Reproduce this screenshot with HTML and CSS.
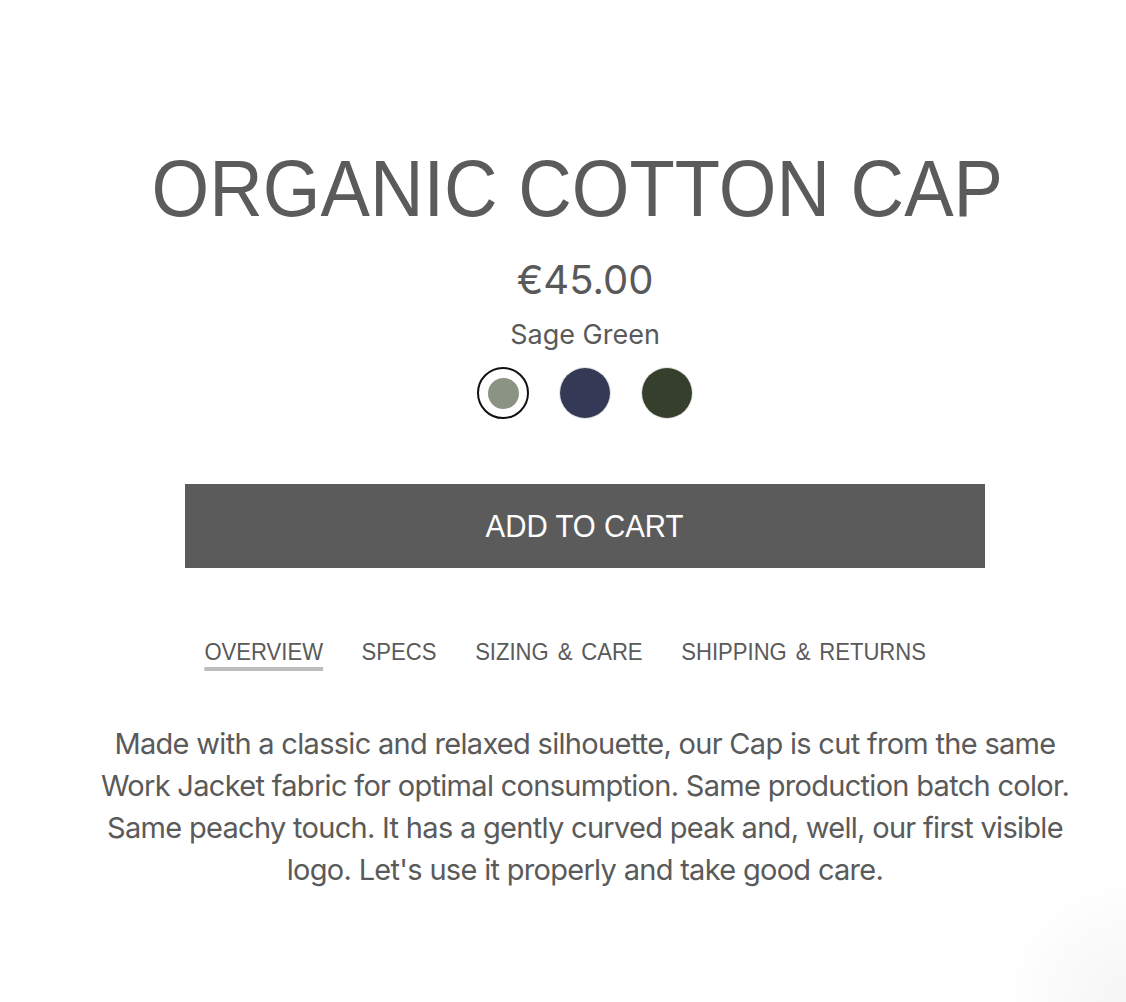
FILE: index.html
```html
<!DOCTYPE html>
<html lang="en">
<head>
<meta charset="utf-8">
<title>Organic Cotton Cap</title>
<link rel="stylesheet" href="styles.css">
</head>
<body>
<main class="product">
  <h1 class="title">ORGANIC COTTON CAP</h1>
  <div class="price">€45.00</div>
  <div class="color-name">Sage Green</div>
  <div class="swatches">
    <button class="swatch selected" aria-label="Sage Green"><span class="dot sage"></span></button>
    <button class="swatch" aria-label="Navy"><span class="dot navy"></span></button>
    <button class="swatch" aria-label="Forest Green"><span class="dot forest"></span></button>
  </div>
  <button class="cart"><span class="cart-label">ADD TO CART</span></button>
  <nav class="tabs">
    <a class="tab active">OVERVIEW</a>
    <a class="tab">SPECS</a>
    <a class="tab">SIZING &amp; CARE</a>
    <a class="tab">SHIPPING &amp; RETURNS</a>
  </nav>
  <p class="desc">Made with a classic and relaxed silhouette, our Cap is cut from the same Work Jacket fabric for optimal consumption. Same production batch color. Same peachy touch. It has a gently curved peak and, well, our first visible logo. Let's use it properly and take good care.</p>
</main>
<div class="corner-glow"></div>
</body>
</html>
```
FILE: styles.css
```css
html, body {
  margin: 0;
  padding: 0;
  background: #ffffff;
}
body {
  width: 1126px;
  height: 1002px;
  overflow: hidden;
  position: relative;
  color: #5a5a5a;
  font-family: "Liberation Sans", Arial, sans-serif;
}
.product {
  padding-left: 44px;
  padding-top: 149px;
  display: flex;
  flex-direction: column;
  align-items: center;
}
.title {
  margin: 0 16px 0 0;
  font-weight: 400;
  font-size: 80px;
  line-height: 80px;
  color: #5b5b5b;
  white-space: nowrap;
  transform: scaleX(0.927);
}
.price {
  margin-top: 27px;
  font-family: Inter, "Noto Sans", sans-serif;
  font-size: 40px;
  line-height: 48px;
  color: #595959;
}
.color-name {
  margin-top: 14px;
  font-family: Inter, "Noto Sans", sans-serif;
  font-size: 27px;
  line-height: 34px;
  color: #5a5a5a;
}
.swatches {
  margin-top: 15px;
  display: flex;
  gap: 30px;
  align-items: center;
}
.swatch {
  width: 52px;
  height: 52px;
  padding: 0;
  border-radius: 50%;
  border: 1px solid #e2e2e2;
  background: #fff;
  display: flex;
  align-items: center;
  justify-content: center;
  box-sizing: border-box;
}
.swatch .dot {
  width: 50px;
  height: 50px;
  border-radius: 50%;
  display: block;
}
.swatch.selected {
  border: 2.5px solid #111;
}
.swatch.selected .dot {
  width: 31px;
  height: 31px;
}
.sage { background: #8b9484; }
.navy { background: #343a55; }
.forest { background: #353f2c; }
.cart {
  margin-top: 65px;
  width: 800px;
  height: 84px;
  border: 0;
  background: #5b5b5b;
  color: #fff;
  font-family: "Liberation Sans", Arial, sans-serif;
  font-size: 32px;
  padding: 0;
}
.cart-label {
  display: inline-block;
  transform: scaleX(0.92);
}
.tabs {
  margin-top: 69px;
  margin-right: 39px;
  display: flex;
  gap: 42px;
  transform: scaleX(0.92);
}
.tab {
  font-size: 24px;
  line-height: 30px;
  word-spacing: 3px;
  color: #5a5a5a;
  border-bottom: 4px solid transparent;
  white-space: nowrap;
}
.tab.active {
  border-bottom-color: #bdbdbd;
}
.desc {
  margin: 52px 0 0;
  width: 1000px;
  text-align: center;
  font-family: Inter, "Noto Sans", sans-serif;
  font-size: 29px;
  line-height: 42px;
  letter-spacing: -0.7px;
  color: #5a5a5a;
}
.corner-glow {
  position: absolute;
  right: 0;
  bottom: 0;
  width: 140px;
  height: 120px;
  background: radial-gradient(circle at 100% 100%, rgba(0,0,0,0.04), rgba(0,0,0,0) 70%);
  pointer-events: none;
}
```
